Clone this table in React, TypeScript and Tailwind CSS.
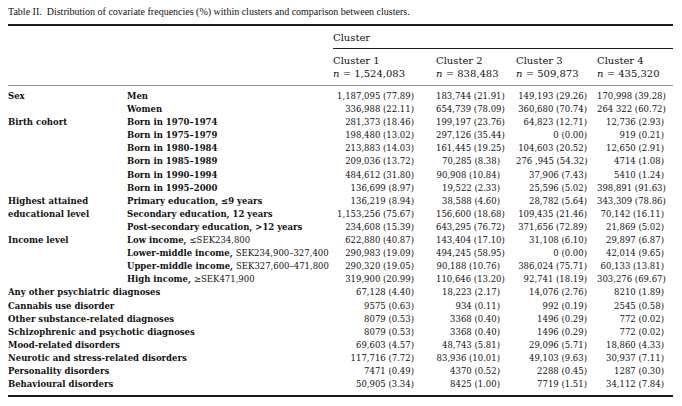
import React from "react";

type Row = {
  group?: string;
  label: React.ReactNode;
  wide?: boolean;
  values: string[];
};

const rows: Row[] = [
  { group: "Sex", label: "Men", values: ["1,187,095 (77.89)", "183,744 (21.91)", "149,193 (29.26)", "170,998 (39.28)"] },
  { label: "Women", values: ["336,988 (22.11)", "654,739 (78.09)", "360,680 (70.74)", "264 322 (60.72)"] },
  { group: "Birth cohort", label: "Born in 1970–1974", values: ["281,373 (18.46)", "199,197 (23.76)", "64,823 (12.71)", "12,736 (2.93)"] },
  { label: "Born in 1975–1979", values: ["198,480 (13.02)", "297,126 (35.44)", "0 (0.00)", "919 (0.21)"] },
  { label: "Born in 1980–1984", values: ["213,883 (14.03)", "161,445 (19.25)", "104,603 (20.52)", "12,650 (2.91)"] },
  { label: "Born in 1985–1989", values: ["209,036 (13.72)", "70,285 (8.38)", "276 ,945 (54.32)", "4714 (1.08)"] },
  { label: "Born in 1990–1994", values: ["484,612 (31.80)", "90,908 (10.84)", "37,906 (7.43)", "5410 (1.24)"] },
  { label: "Born in 1995–2000", values: ["136,699 (8.97)", "19,522 (2.33)", "25,596 (5.02)", "398,891 (91.63)"] },
  { group: "Highest attained", label: "Primary education, ≤9 years", values: ["136,219 (8.94)", "38,588 (4.60)", "28,782 (5.64)", "343,309 (78.86)"] },
  { group: "educational level", label: "Secondary education, 12 years", values: ["1,153,256 (75.67)", "156,600 (18.68)", "109,435 (21.46)", "70,142 (16.11)"] },
  { label: "Post-secondary education, >12 years", values: ["234,608 (15.39)", "643,295 (76.72)", "371,656 (72.89)", "21,869 (5.02)"] },
  {
    group: "Income level",
    label: (
      <>
        Low income, <span className="font-normal">≤SEK234,800</span>
      </>
    ),
    values: ["622,880 (40.87)", "143,404 (17.10)", "31,108 (6.10)", "29,897 (6.87)"],
  },
  {
    label: (
      <>
        Lower-middle income, <span className="font-normal">SEK234,900–327,400</span>
      </>
    ),
    values: ["290,983 (19.09)", "494,245 (58.95)", "0 (0.00)", "42,014 (9.65)"],
  },
  {
    label: (
      <>
        Upper-middle income, <span className="font-normal">SEK327,600–471,800</span>
      </>
    ),
    values: ["290,320 (19.05)", "90,188 (10.76)", "386,024 (75.71)", "60,133 (13.81)"],
  },
  {
    label: (
      <>
        High income, <span className="font-normal">≥SEK471,900</span>
      </>
    ),
    values: ["319,900 (20.99)", "110,646 (13.20)", "92,741 (18.19)", "303,276 (69.67)"],
  },
  { wide: true, label: "Any other psychiatric diagnoses", values: ["67,128 (4.40)", "18,223 (2.17)", "14,076 (2.76)", "8210 (1.89)"] },
  { wide: true, label: "Cannabis use disorder", values: ["9575 (0.63)", "934 (0.11)", "992 (0.19)", "2545 (0.58)"] },
  { wide: true, label: "Other substance-related diagnoses", values: ["8079 (0.53)", "3368 (0.40)", "1496 (0.29)", "772 (0.02)"] },
  { wide: true, label: "Schizophrenic and psychotic diagnoses", values: ["8079 (0.53)", "3368 (0.40)", "1496 (0.29)", "772 (0.02)"] },
  { wide: true, label: "Mood-related disorders", values: ["69,603 (4.57)", "48,743 (5.81)", "29,096 (5.71)", "18,860 (4.33)"] },
  { wide: true, label: "Neurotic and stress-related disorders", values: ["117,716 (7.72)", "83,936 (10.01)", "49,103 (9.63)", "30,937 (7.11)"] },
  { wide: true, label: "Personality disorders", values: ["7471 (0.49)", "4370 (0.52)", "2288 (0.45)", "1287 (0.30)"] },
  { wide: true, label: "Behavioural disorders", values: ["50,905 (3.34)", "8425 (1.00)", "7719 (1.51)", "34,112 (7.84)"] },
];

const clusters = [
  { name: "Cluster 1", n: "1,524,083" },
  { name: "Cluster 2", n: "838,483" },
  { name: "Cluster 3", n: "509,873" },
  { name: "Cluster 4", n: "435,320" },
];

// right padding per data column, so numbers line up like the print
const pads = ["pr-[22px]", "pr-[16px]", "pr-[10px]", "pr-[9px]"];

export default function App() {
  return (
    <div className="w-[682px] h-[406px] bg-white px-2 pt-[6px] text-[#111]">
      {/* Caption */}
      <p className="font-['Liberation_Serif',serif] text-[10px] leading-[12px] whitespace-pre">
        {"Table II.  Distribution of covariate frequencies (%) within clusters and comparison between clusters."}
      </p>

      <div className="mt-[6px] w-[665px] border-t-2 border-b-2 border-[#1a1a1a] font-['DejaVu_Serif',serif] text-[8.5px]">
        {/* Header */}
        <div className="flex border-b-[1.5px] border-[#8c8c8c] text-[10px]">
          <div className="w-[325px]" />
          <div className="flex-1">
            <div className="border-b border-[#1a1a1a] py-[4.5px] leading-[13px]">Cluster</div>
            <div className="grid grid-cols-[103px_80px_81px_76px] pt-[4.5px] pb-[5.5px] leading-[13px]">
              {clusters.map((c) => (
                <div key={c.name}>
                  <div>{c.name}</div>
                  <div>
                    <i>n</i> = {c.n}
                  </div>
                </div>
              ))}
            </div>
          </div>
        </div>

        {/* Body */}
        <div className="pt-[4px] pb-[4px]">
          {rows.map((r, i) => (
            <div
              key={i}
              className="grid grid-cols-[119px_206px_103px_80px_81px_76px] h-[13.1px] leading-[13.1px] whitespace-nowrap"
            >
              {r.wide ? (
                <div className="col-span-2 font-bold">{r.label}</div>
              ) : (
                <>
                  <div className="font-bold">{r.group}</div>
                  <div className="font-bold">{r.label}</div>
                </>
              )}
              {r.values.map((v, j) => (
                <div key={j} className={`text-right ${pads[j]}`}>
                  {v}
                </div>
              ))}
            </div>
          ))}
        </div>
      </div>
    </div>
  );
}
